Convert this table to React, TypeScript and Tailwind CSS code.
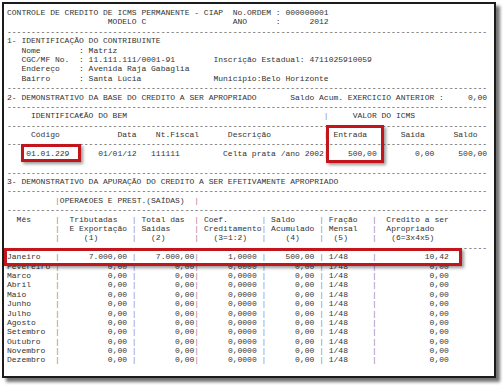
import React from "react";

type Part = [number, string];

// build a fixed-width report line from [column, text] pairs
function line(...parts: Part[]) {
  let s = "";
  for (const [col, text] of parts) {
    if (s.length < col) s = s.padEnd(col);
    s += text;
  }
  return s;
}

// right aligned: text ends at column `end`
function r(end: number, text: string): Part {
  return [end - text.length + 1, text];
}

const dash = "-".repeat(100);

const months = [
  ["Janeiro", "7.000,00", "7.000,00", "1,0000", "500,00", "10,42"],
  ["Fevereiro", "0,00", "0,00", "0,0000", "0,00", "0,00"],
  ["Marco", "0,00", "0,00", "0,0000", "0,00", "0,00"],
  ["Abril", "0,00", "0,00", "0,0000", "0,00", "0,00"],
  ["Maio", "0,00", "0,00", "0,0000", "0,00", "0,00"],
  ["Junho", "0,00", "0,00", "0,0000", "0,00", "0,00"],
  ["Julho", "0,00", "0,00", "0,0000", "0,00", "0,00"],
  ["Agosto", "0,00", "0,00", "0,0000", "0,00", "0,00"],
  ["Setembro", "0,00", "0,00", "0,0000", "0,00", "0,00"],
  ["Outubro", "0,00", "0,00", "0,0000", "0,00", "0,00"],
  ["Novembro", "0,00", "0,00", "0,0000", "0,00", "0,00"],
  ["Dezembro", "0,00", "0,00", "0,0000", "0,00", "0,00"],
];

const rows: string[] = [
  line([0, "CONTROLE DE CREDITO DE ICMS PERMANENTE - CIAP"], [47, "No.ORDEM : 000000001"]),
  line([21, "MODELO C"], [47, "ANO      :      2012"]),
  dash,
  line([0, "1- IDENTIFICAÇÃO DO CONTRIBUINTE"]),
  line([3, "Nome"], [15, ": Matriz"]),
  line([3, "CGC/MF No."], [15, ": 11.111.111/0001-91"], [43, "Inscrição Estadual: 4711025910059"]),
  line([3, "Endereço"], [15, ": Avenida Raja Gabaglia"]),
  line([3, "Bairro"], [15, ": Santa Lúcia"], [43, "Municipio:Belo Horizonte"]),
  dash,
  line([0, "2- DEMONSTRATIVO DA BASE DO CREDITO A SER APROPRIADO"], [59, "Saldo Acum. EXERCICIO ANTERIOR :"], r(99, "0,00")),
  dash,
  line([5, "IDENTIFICA€ÃO DO BEM"], [66, "|"], [72, "VALOR DO ICMS"]),
  dash,
  line([5, "Código"], [23, "Data"], [31, "Nt.Fiscal"], [46, "Descrição"], [66, "|"], [68, "Entrada"], [82, "Saida"], [93, "Saldo"]),
  dash,
  line([4, "01.01.229"], r(26, "01/01/12"), [30, "111111"], [45, "Celta prata /ano 2002"], [66, "|"], r(76, "500,00"), r(88, "0,00"), r(99, "500,00")),
  "",
  dash,
  line([0, "3- DEMONSTRATIVO DA APURAÇÃO DO CREDITO A SER EFETIVAMENTE APROPRIADO"]),
  dash,
  line([10, "|OPERA€OES E PREST.(SAÍDAS)"], [39, "|"]),
  dash,
  line([2, "Mês"], [10, "|"], [13, "Tributadas"], [26, "| Total das"], [39, "| Coef."], [53, "| Saldo"], [65, "| Fração"], [76, "|"], [79, "Credito a ser"]),
  line([10, "|"], [13, "E Exportação"], [26, "| Saidas"], [39, "| Creditamento"], [53, "| Acumulado"], [65, "| Mensal"], [76, "|"], [79, "Apropriado"]),
  line([10, "|"], [16, "(1)"], [26, "|"], [30, "(2)"], [39, "|"], [43, "(3=1:2)"], [53, "|"], [58, "(4)"], [65, "|"], [68, "(5)"], [76, "|"], [80, "(6=3x4x5)"]),
  dash,
  ...months.map(([m, a, b, c, d, e]) =>
    line([0, m], [10, "|"], r(24, a), [26, "|"], r(38, b), [39, "|"], r(51, c), [53, "|"], r(63, d), [65, "|"], [67, "1/48"], [76, "|"], r(91, e))
  ),
];

function ReportLine({ text }: { text: string }) {
  // pipes show up a bit purple in the print preview
  const chunks = text.split(/(\|)/);
  return (
    <div className="h-[9.4px] whitespace-pre">
      {chunks.map((c, i) =>
        c === "|" ? (
          <span key={i} className="text-[#9a7d9c]">
            |
          </span>
        ) : (
          <span key={i}>{c}</span>
        )
      )}
    </div>
  );
}

export default function App() {
  return (
    <div className="w-[504px] h-[385px] bg-white pl-[2px] pt-[2px]">
      <div
        className="relative w-[494px] h-[376px] border-2 border-[#1c1c1c] bg-white pl-[3px] pt-[4px]
                   shadow-[4px_4px_3px_rgba(0,0,0,0.55)] text-[8px] leading-[9.4px] text-[#333333]
                   font-['Liberation_Mono',monospace]"
      >
        {rows.map((t, i) => (
          <ReportLine key={i} text={t} />
        ))}

        {/* highlight boxes */}
        <div className="absolute left-[17px] top-[140px] w-[60px] h-[18px] border-[3px] border-[#c3161c] shadow-[2px_2px_3px_rgba(0,0,0,0.4)]" />
        <div className="absolute left-[322px] top-[121px] w-[58px] h-[38px] border-[3px] border-[#c3161c] shadow-[2px_2px_3px_rgba(0,0,0,0.4)]" />
        <div className="absolute left-[0px] top-[244px] w-[458px] h-[18px] border-[3px] border-[#c3161c] shadow-[2px_2px_3px_rgba(0,0,0,0.4)]" />
      </div>
    </div>
  );
}
